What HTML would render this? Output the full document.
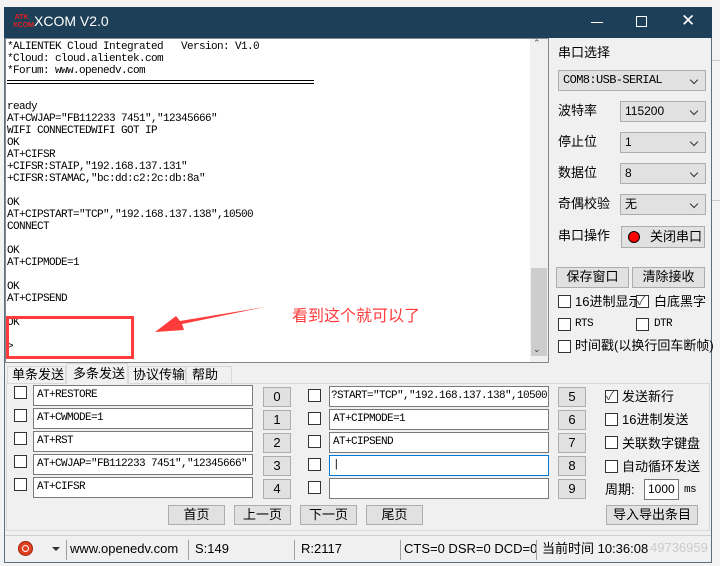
<!DOCTYPE html>
<html><head><meta charset="utf-8"><style>
*{box-sizing:border-box;margin:0;padding:0}
body{width:720px;height:566px;overflow:hidden;background:#f3f3f3;position:relative;font-family:"Liberation Sans","Noto Sans CJK SC",sans-serif;font-size:12px;color:#000}
.a{position:absolute}
.mono{font-family:"Liberation Mono","Noto Sans CJK SC",monospace;font-size:11px;line-height:12px;white-space:pre;letter-spacing:-0.6px}
.cb{position:absolute;width:13px;height:13px;border:1px solid #333;background:#fff}
.inp{position:absolute;height:21px;border:1px solid #7a7a7a;background:#fff;padding:2px 3px;font-family:"Liberation Mono","Noto Sans CJK SC",monospace;font-size:11px;letter-spacing:-0.6px;line-height:14px;white-space:pre;overflow:hidden}
.btn{position:absolute;border:1px solid #adadad;background:#e1e1e1;text-align:center;font-size:13px;line-height:18px}
.sel{position:absolute;height:21px;border:1px solid #adadad;background:#e1e1e1;padding-left:4px;line-height:19px;font-size:12px}
.sel:after{content:"";position:absolute;right:8px;top:6px;width:5px;height:5px;border-right:1px solid #333;border-bottom:1px solid #333;transform:rotate(45deg)}
.lbl{position:absolute;font-size:13px;line-height:15px}
.sep{position:absolute;top:540px;width:1px;height:20px;background:#a0a0a0}
.tab{position:absolute;border:1px solid #d9d9d9;background:#f0f0f0;font-size:13px;line-height:16px}
</style></head><body>
<div class="a" style="left:711px;top:60px;width:9px;height:1px;background:#ccc"></div>
<div class="a" style="left:711px;top:200px;width:9px;height:1px;background:#ccc"></div>
<div class="a" style="left:4px;top:7px;width:708px;height:556px;background:#f0f0f0;border:1px solid #5a6f80"></div>
<div class="a" style="left:4px;top:7px;width:708px;height:31px;background:#1e3f58"></div>
<div class="a" style="left:13px;top:14px;width:17px;height:16px;font-size:7px;line-height:8px;color:#e02020;font-weight:bold;text-align:center">ATK<br>XCOM</div>
<div class="a" style="left:34px;top:13px;color:#fff;font-size:14px">XCOM V2.0</div>
<div class="a" style="left:591px;top:22px;width:12px;height:1px;background:#fff"></div>
<div class="a" style="left:636px;top:16px;width:11px;height:11px;border:1px solid #fff"></div>
<div class="a" style="left:681px;top:12px;color:#fff;font-size:17px;line-height:18px">✕</div>
<div class="a" style="left:5px;top:38px;width:544px;height:325px;background:#fff;border:1px solid #828790"></div>
<div class="a" style="left:530px;top:39px;width:18px;height:323px;background:#f0f0f0"></div>
<div class="a" style="left:531px;top:268px;width:16px;height:88px;background:#cdcdcd"></div>
<div class="a" style="left:533px;top:38px;font-size:9px;color:#555">⌃</div>
<div class="a" style="left:533px;top:344px;font-size:9px;color:#333">⌄</div>
<div class="a mono" style="left:7px;top:41px">*ALIENTEK Cloud Integrated   Version: V1.0
*Cloud: cloud.alientek.com
*Forum: www.openedv.com</div>
<div class="a" style="left:7px;top:80px;width:307px;height:4px;border-top:1px solid #000;border-bottom:1px solid #000"></div>
<div class="a mono" style="left:7px;top:101px">ready
AT+CWJAP="FB112233 7451","12345666"
WIFI CONNECTEDWIFI GOT IP
OK
AT+CIFSR
+CIFSR:STAIP,"192.168.137.131"
+CIFSR:STAMAC,"bc:dd:c2:2c:db:8a"

OK
AT+CIPSTART="TCP","192.168.137.138",10500
CONNECT

OK
AT+CIPMODE=1

OK
AT+CIPSEND

OK

&gt;</div>
<div class="a" style="left:6px;top:316px;width:128px;height:43px;border:3px solid #ff3b3b"></div>
<svg class="a" style="left:150px;top:300px" width="120" height="40"><polygon points="115,7 32,24 34,30 5,32 26,16 30,21" fill="#ff3b3b"/></svg>
<div class="a" style="left:292px;top:302px;color:#ff3b3b;font-size:16px">看到这个就可以了</div>
<div class="lbl" style="left:558px;top:45px">串口选择</div>
<div class="sel mono" style="left:558px;top:70px;width:148px;line-height:19px;letter-spacing:-0.6px">COM8:USB-SERIAL</div>
<div class="lbl" style="left:558px;top:103px">波特率</div>
<div class="sel" style="left:620px;top:101px;width:86px">115200</div>
<div class="lbl" style="left:558px;top:134px">停止位</div>
<div class="sel" style="left:620px;top:132px;width:86px">1</div>
<div class="lbl" style="left:558px;top:165px">数据位</div>
<div class="sel" style="left:620px;top:163px;width:86px">8</div>
<div class="lbl" style="left:558px;top:196px">奇偶校验</div>
<div class="sel" style="left:620px;top:194px;width:86px">无</div>
<div class="lbl" style="left:558px;top:228px">串口操作</div>
<div class="btn" style="left:621px;top:226px;width:84px;height:22px;font-size:13px;text-align:left;padding-left:28px;line-height:20px">关闭串口</div>
<div class="a" style="left:628px;top:231px;width:12px;height:12px;border-radius:50%;background:#f00;border:1px solid #000"></div>
<div class="btn" style="left:556px;top:267px;width:73px;height:21px">保存窗口</div>
<div class="btn" style="left:632px;top:267px;width:73px;height:21px">清除接收</div>
<div class="cb" style="left:558px;top:295px"></div><div class="lbl" style="left:575px;top:294px">16进制显示</div>
<div class="cb" style="left:636px;top:295px"></div><div class="a" style="left:637px;top:292px;font-size:12px;color:#444">✓</div><div class="lbl" style="left:654px;top:294px">白底黑字</div>
<div class="cb" style="left:558px;top:318px"></div><div class="a mono" style="left:575px;top:318px">RTS</div>
<div class="cb" style="left:636px;top:318px"></div><div class="a mono" style="left:654px;top:318px">DTR</div>
<div class="cb" style="left:558px;top:340px"></div><div class="lbl" style="left:575px;top:338px">时间戳(以换行回车断帧)</div>
<div class="a" style="left:6px;top:383px;width:704px;height:148px;background:#f0f0f0;border:1px solid #d9d9d9"></div>
<div class="tab" style="left:7px;top:366px;width:59px;height:18px;padding-left:4px">单条发送</div>
<div class="tab" style="left:66px;top:363px;width:62px;height:21px;border-bottom:none;padding:2px 0 0 6px">多条发送</div>
<div class="tab" style="left:128px;top:366px;width:58px;height:18px;padding-left:4px">协议传输</div>
<div class="tab" style="left:186px;top:366px;width:46px;height:18px;padding-left:5px">帮助</div>
<div class="cb" style="left:14px;top:386px"></div><div class="inp" style="left:33px;top:385px;width:220px">AT+RESTORE</div><div class="btn" style="left:263px;top:387px;width:28px;height:20px">0</div>
<div class="cb" style="left:14px;top:409px"></div><div class="inp" style="left:33px;top:408px;width:220px">AT+CWMODE=1</div><div class="btn" style="left:263px;top:410px;width:28px;height:20px">1</div>
<div class="cb" style="left:14px;top:432px"></div><div class="inp" style="left:33px;top:431px;width:220px">AT+RST</div><div class="btn" style="left:263px;top:433px;width:28px;height:20px">2</div>
<div class="cb" style="left:14px;top:455px"></div><div class="inp" style="left:33px;top:454px;width:220px">AT+CWJAP="FB112233 7451","12345666"</div><div class="btn" style="left:263px;top:456px;width:28px;height:20px">3</div>
<div class="cb" style="left:14px;top:478px"></div><div class="inp" style="left:33px;top:477px;width:220px">AT+CIFSR</div><div class="btn" style="left:263px;top:479px;width:28px;height:20px">4</div>
<div class="cb" style="left:308px;top:389px"></div><div class="inp" style="left:329px;top:386px;width:220px;padding-left:1px">?START="TCP","192.168.137.138",10500</div><div class="btn" style="left:558px;top:387px;width:28px;height:20px">5</div>
<div class="cb" style="left:308px;top:412px"></div><div class="inp" style="left:329px;top:409px;width:220px">AT+CIPMODE=1</div><div class="btn" style="left:558px;top:410px;width:28px;height:20px">6</div>
<div class="cb" style="left:308px;top:435px"></div><div class="inp" style="left:329px;top:432px;width:220px">AT+CIPSEND</div><div class="btn" style="left:558px;top:433px;width:28px;height:20px">7</div>
<div class="cb" style="left:308px;top:458px"></div><div class="inp" style="left:329px;top:455px;width:220px;border-color:#0078d7">|</div><div class="btn" style="left:558px;top:456px;width:28px;height:20px">8</div>
<div class="cb" style="left:308px;top:481px"></div><div class="inp" style="left:329px;top:478px;width:220px;height:21px"></div><div class="btn" style="left:558px;top:479px;width:28px;height:20px">9</div>
<div class="cb" style="left:605px;top:390px"></div><div class="a" style="left:606px;top:387px;font-size:12px;color:#444">✓</div><div class="lbl" style="left:622px;top:389px">发送新行</div>
<div class="cb" style="left:605px;top:413px"></div><div class="lbl" style="left:622px;top:412px">16进制发送</div>
<div class="cb" style="left:605px;top:436px"></div><div class="lbl" style="left:622px;top:436px">关联数字键盘</div>
<div class="cb" style="left:605px;top:460px"></div><div class="lbl" style="left:622px;top:459px">自动循环发送</div>
<div class="lbl" style="left:605px;top:482px">周期:</div>
<div class="inp" style="left:644px;top:479px;width:35px;height:21px;font-family:'Liberation Sans';font-size:12px;letter-spacing:0">1000</div>
<div class="a mono" style="left:684px;top:484px">ms</div>
<div class="btn" style="left:168px;top:505px;width:57px;height:20px">首页</div>
<div class="btn" style="left:234px;top:505px;width:57px;height:20px">上一页</div>
<div class="btn" style="left:300px;top:505px;width:57px;height:20px">下一页</div>
<div class="btn" style="left:366px;top:505px;width:57px;height:20px">尾页</div>
<div class="btn" style="left:606px;top:505px;width:92px;height:20px">导入导出条目</div>
<div class="a" style="left:5px;top:535px;width:706px;height:1px;background:#d0d0d0"></div>
<div class="a" style="left:18px;top:541px;width:15px;height:15px;border-radius:50%;background:#e04020;border:1px solid #a02010"></div>
<div class="a" style="left:22px;top:545px;width:7px;height:7px;border-radius:50%;border:1.5px solid #fff"></div>
<div class="a" style="left:52px;top:547px;width:0;height:0;border-left:4px solid transparent;border-right:4px solid transparent;border-top:4px solid #333"></div>
<div class="sep" style="left:66px"></div>
<div class="a" style="left:70px;top:541px;font-size:13px;line-height:15px">www.openedv.com</div>
<div class="sep" style="left:188px"></div>
<div class="a" style="left:195px;top:541px;font-size:13px;line-height:15px">S:149</div>
<div class="sep" style="left:294px"></div>
<div class="a" style="left:301px;top:541px;font-size:13px;line-height:15px">R:2117</div>
<div class="sep" style="left:400px"></div>
<div class="a" style="left:404px;top:541px;font-size:13px;line-height:15px">CTS=0 DSR=0 DCD=0</div>
<div class="sep" style="left:536px"></div>
<div class="a" style="left:542px;top:541px;font-size:13px;line-height:15px">当前时间 10:36:08</div>
<div class="a" style="left:650px;top:540px;font-size:13px;color:#ccc">49736959</div>
</body></html>
